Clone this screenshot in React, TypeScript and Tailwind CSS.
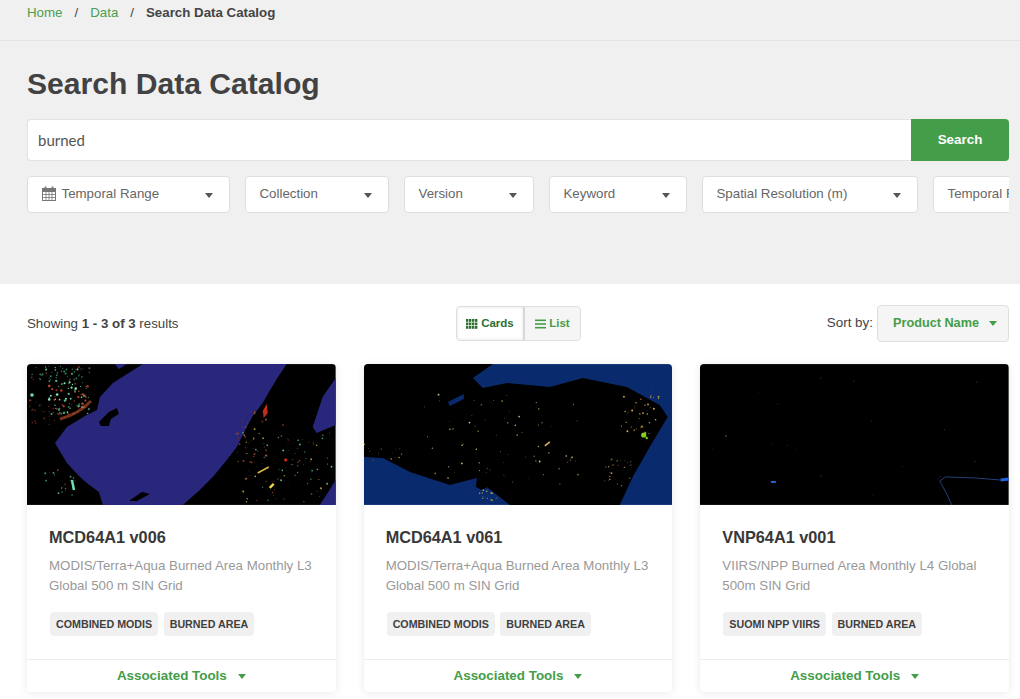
const FILTERS = [
  { label: 'Temporal Range', width: 'w-[203px]', icon: true },
  { label: 'Collection', width: 'w-[144px]' },
  { label: 'Version', width: 'w-[130px]' },
  { label: 'Keyword', width: 'w-[138px]' },
  { label: 'Spatial Resolution (m)', width: 'w-[216px]' },
  { label: 'Temporal Resolution', width: 'w-[190px]' },
];

type Dot = [number, number, number, string];

// small seeded scatter so the map specks stay put between renders
function scatter(seed: number, count: number, x0: number, y0: number, x1: number, y1: number, colors: string[], size = 1): Dot[] {
  let s = seed * 7919;
  const next = () => {
    s = (s * 16807) % 2147483647;
    return s / 2147483647;
  };
  const out: Dot[] = [];
  for (let i = 0; i < count; i++) {
    out.push([x0 + next() * (x1 - x0), y0 + next() * (y1 - y0), size * (0.4 + next() * 0.8), colors[Math.floor(next() * colors.length)]]);
  }
  return out;
}

function Dots({ dots }: { dots: Dot[] }) {
  return (
    <>
      {dots.map((d, i) => (
        <circle key={i} cx={d[0]} cy={d[1]} r={d[2]} fill={d[3]} />
      ))}
    </>
  );
}

function MapOne() {
  return (
    <svg viewBox="0 0 309 141" className="block h-[141px] w-full blur-[0.5px]">
      <rect width="309" height="141" fill="#000" />
      <path d="M116 0L260 0L250 15L244 25L236 39L226 52L220 63L210 83L200 96L186 113L173 126L156 141L76 141L72 128L60 119L53 113L40 99L28 79L40 63L58 52L70 46L73 33L86 19Z" fill="#29277c" />
      <path d="M88 0L100 0L92 5ZM309 14L296 33L286 63L290 69L309 61ZM309 116L301 129L293 141L309 141Z" fill="#29277c" />
      <path d="M72 58L82 48L90 44L92 50L84 55L82 62L74 62ZM102 137L115 128L123 130L110 137Z" fill="#000" />
      <Dots dots={scatter(11, 50, 4, 2, 66, 16, ['#58b98e', '#3f8a68', '#2e6b50', '#6a3020'], 0.9)} />
      <Dots dots={scatter(13, 90, 22, 16, 62, 50, ['#7fe3b4', '#58b98e', '#3f8a68', '#b5402a', '#8a3a22'], 1.1)} />
      <Dots dots={scatter(17, 30, 2, 36, 30, 62, ['#6a3020', '#5c2a1c', '#8a3a22'], 0.8)} />
      <path d="M33 55Q52 50 64 37" stroke="#b84e28" strokeWidth="3" fill="none" opacity="0.65" />
      <circle cx="5" cy="31" r="1.8" fill="#6fdcb0" />
      <Dots dots={scatter(23, 20, 18, 105, 50, 132, ['#58b98e', '#8a3a22', '#3f8a68'], 0.9)} />
      <path d="M45 116L47 126" stroke="#6fe0b0" strokeWidth="2.5" />
      <Dots dots={scatter(41, 40, 206, 48, 240, 100, ['#6a3020', '#8a3a22', '#5c2a1c', '#8f7a30'], 0.9)} />
      <Dots dots={scatter(37, 90, 215, 60, 305, 139, ['#8a3a22', '#58b98e', '#a89a3c', '#6a3020', '#3f8a68'], 0.8)} />
      <path d="M236 47L240 40L241 49L237 54Z" fill="#c42c1c" />
      <path d="M231 109L242 103" stroke="#d8b54a" strokeWidth="1.6" />
      <path d="M243 124L247 120" stroke="#e8d84a" strokeWidth="2.4" />
      <circle cx="259" cy="96" r="1.6" fill="#c42c1c" />
    </svg>
  );
}

function MapTwo() {
  return (
    <svg viewBox="0 0 309 141" className="block h-[141px] w-full blur-[0.5px]">
      <rect width="309" height="141" fill="#0a2a6e" />
      <path d="M0 0L129 0L109 14L119 24L143 19L186 23L219 14L263 23L296 41L304 53L286 83L269 113L256 141L146 141L123 123L113 114L86 121L46 108L19 94L0 93Z" fill="#000" />
      <path d="M84 38L100 30L100 35L86 42Z" fill="#0a2a6e" />
      <path d="M113 114L130 120L118 126L112 123Z" fill="#000" />
      <Dots dots={scatter(5, 70, 60, 30, 215, 120, ['#b59a4a', '#8a6d32', '#d8c27a', '#6d5a2a'], 0.8)} />
      <Dots dots={scatter(9, 36, 256, 25, 296, 70, ['#b59a4a', '#d6a24a', '#7d5e2a'], 0.9)} />
      <Dots dots={scatter(15, 24, 240, 95, 268, 122, ['#b59a4a', '#7d5e2a'], 0.8)} />
      <Dots dots={scatter(19, 16, 0, 80, 40, 98, ['#b59a4a', '#7d5e2a'], 0.7)} />
      <Dots dots={scatter(21, 12, 112, 124, 135, 141, ['#9aa63a', '#b59a4a'], 0.9)} />
      <circle cx="280" cy="71" r="2.6" fill="#7ed321" />
      <circle cx="283" cy="74" r="1.2" fill="#7ed321" />
      <path d="M181 82L186 78" stroke="#e0b060" strokeWidth="1.6" />
    </svg>
  );
}

function MapThree() {
  return (
    <svg viewBox="0 0 309 141" className="block h-[141px] w-full blur-[0.5px]">
      <rect width="309" height="141" fill="#000" />
      <Dots dots={scatter(31, 30, 10, 8, 300, 135, ['#1c2433', '#262b3a', '#141a28'], 0.7)} />
      <circle cx="26" cy="72" r="1" fill="#2a3b66" />
      <path d="M71 118L76 118" stroke="#1f63d8" strokeWidth="2" />
      <path d="M240 117L246 113L275 114L300 116L309 116M240 117L247 130L252 141" stroke="#2f4f94" strokeWidth="0.8" fill="none" />
      <path d="M301 116L309 115" stroke="#1f63e0" strokeWidth="3" />
    </svg>
  );
}

function GridIcon() {
  return (
    <svg viewBox="0 0 12 10" className="h-[10px] w-[12px]" fill="currentColor">
      {[0, 3.5, 7].map((y) => [0, 3, 6, 9].map((x) => <rect key={`${x}-${y}`} x={x} y={y} width="2.4" height="2.8" />))}
    </svg>
  );
}

function ListIcon() {
  return (
    <svg viewBox="0 0 11 10" className="h-[10px] w-[11px]" fill="currentColor">
      <rect y="0.5" width="11" height="1.6" />
      <rect y="4.2" width="11" height="1.6" />
      <rect y="7.9" width="11" height="1.6" />
    </svg>
  );
}

function CalendarIcon() {
  return (
    <svg viewBox="0 0 14 15" className="h-[15px] w-[14px] text-[#777]" fill="none" stroke="currentColor" strokeWidth="1">
      <rect x="0.5" y="2.5" width="13" height="12" />
      <rect x="0.5" y="2.5" width="13" height="3" fill="currentColor" />
      <path d="M3.5 0.5V3.5M10.5 0.5V3.5" strokeWidth="1.8" />
      <path d="M0.5 8.5H13.5M0.5 11.5H13.5M4 5.5V14.5M7 5.5V14.5M10 5.5V14.5" strokeWidth="0.8" />
    </svg>
  );
}

function Caret({ className }: { className: string }) {
  return <span className={`inline-block h-0 w-0 border-x-[4.5px] border-t-[5px] border-x-transparent ${className}`} />;
}

const CARDS = [
  { title: 'MCD64A1 v006', desc: 'MODIS/Terra+Aqua Burned Area Monthly L3 Global 500 m SIN Grid', tags: ['COMBINED MODIS', 'BURNED AREA'], map: <MapOne /> },
  { title: 'MCD64A1 v061', desc: 'MODIS/Terra+Aqua Burned Area Monthly L3 Global 500 m SIN Grid', tags: ['COMBINED MODIS', 'BURNED AREA'], map: <MapTwo /> },
  { title: 'VNP64A1 v001', desc: 'VIIRS/NPP Burned Area Monthly L4 Global 500m SIN Grid', tags: ['SUOMI NPP VIIRS', 'BURNED AREA'], map: <MapThree /> },
];

export default function App() {
  return (
    <div className="h-[699px] w-[1020px] overflow-hidden bg-white [font-family:'Liberation_Sans',Arial,sans-serif] text-[#444]">
      <div className="h-[284px] bg-[#f0f0f0]">
        <nav className="flex h-[41px] items-start gap-[12px] border-b border-[#e4e4e4] px-[27px] pt-[4px] text-[13.3px] leading-[17px]">
          <a className="text-[#4a9f4e]">Home</a>
          <span>/</span>
          <a className="text-[#4a9f4e]">Data</a>
          <span>/</span>
          <span className="font-bold">Search Data Catalog</span>
        </nav>
        <div className="px-[27px]">
          <h1 className="mt-[23px] text-[30.1px] leading-[40px] font-bold text-[#424242]">Search Data Catalog</h1>
          <div className="mt-[15px] flex h-[42px] w-[982px]">
            <div className="flex flex-1 items-center rounded-l-[4px] border border-r-0 border-[#e2e2e2] bg-white pl-[10px] [font-family:Lato,sans-serif] text-[15px] text-[#555]">burned</div>
            <button className="w-[98px] rounded-r-[4px] bg-[#449d48] text-[13.4px] font-bold text-white">Search</button>
          </div>
          <div className="mt-[15px] flex w-[982px] gap-[15px] overflow-hidden">
            {FILTERS.map((f) => (
              <div key={f.label} className={`flex h-[37px] shrink-0 items-center justify-between rounded-[4px] border border-[#dedede] bg-white pr-[16px] text-[13.3px] text-[#666] ${f.width} pl-[13.5px]`}>
                <span className="flex items-center gap-[6px] pb-[2px]">
                  {f.icon && <CalendarIcon />}
                  {f.label}
                </span>
                <Caret className="mt-[2px] border-t-[#555]" />
              </div>
            ))}
          </div>
        </div>
      </div>

      <div className="px-[27px]">
        <div className="mt-[21px] grid h-[37px] w-[982px] grid-cols-3 items-center">
          <p className="text-[13.3px]">
            Showing <b>1 - 3 of 3</b> results
          </p>
          <div className="flex justify-center">
            <div className="ml-[1px] flex h-[35px] rounded-[4px] border border-[#dedede] text-[11.5px] font-bold">
              <span className="flex w-[68px] items-center justify-center gap-[3px] rounded-l-[4px] border-r-2 border-[#d8d8d8] bg-white text-[#2e7031] shadow-[inset_0_0_3px_rgba(0,0,0,0.12)]">
                <GridIcon />
                Cards
              </span>
              <span className="flex w-[55px] items-center justify-center gap-[3px] rounded-r-[4px] bg-[#f5f5f5] text-[#449d48]">
                <ListIcon />
                List
              </span>
            </div>
          </div>
          <div className="flex items-center justify-end gap-[4px]">
            <span className="text-[13.4px]">Sort by:</span>
            <div className="flex h-[37px] w-[132px] items-center justify-between rounded-[4px] border border-[#dedede] bg-[#f5f5f5] pr-[11px] pl-[15px] text-[12.7px] font-bold text-[#449d48]">
              Product Name
              <Caret className="border-t-[#449d48]" />
            </div>
          </div>
        </div>

        <div className="mt-[22px] grid w-[982px] grid-cols-3 gap-[28px]">
          {CARDS.map((c) => (
            <div key={c.title} className="flex h-[328px] flex-col overflow-hidden rounded-[4px] bg-white shadow-[0_1px_8px_rgba(0,0,0,0.09)]">
              {c.map}
              <div className="flex-1 px-[22px] pt-[21px]">
                <h3 className="text-[16.3px] leading-[22px] font-bold text-[#383838]">{c.title}</h3>
                <p className="mt-[7.5px] text-[13.3px] leading-[20px] text-[#999]">{c.desc}</p>
                <div className="mt-[16.5px] flex gap-[5.5px] pl-[1px]">
                  {c.tags.map((t) => (
                    <span key={t} className="flex h-[24px] items-center rounded-[4px] bg-[#f0f0f0] px-[6px] text-[10.7px] font-bold text-[#3f3f3f]">{t}</span>
                  ))}
                </div>
              </div>
              <div className="flex h-[33px] items-center justify-center gap-[11px] border-t border-[#eee] pt-[1px] text-[13.4px] font-bold text-[#449d48]">
                Associated Tools
                <Caret className="border-t-[#449d48]" />
              </div>
            </div>
          ))}
        </div>
      </div>
    </div>
  );
}
